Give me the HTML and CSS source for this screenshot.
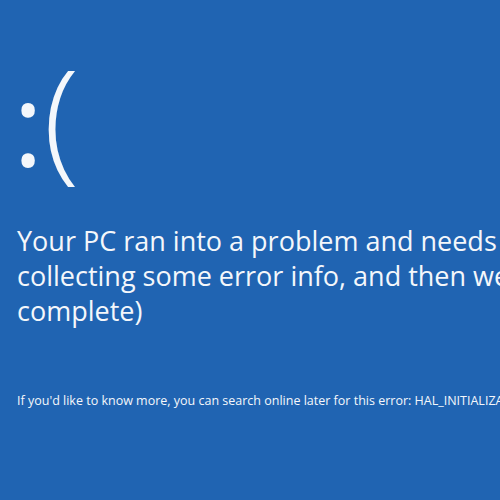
FILE: index.html
```html
<!DOCTYPE html>
<html lang="en">
<head>
    <meta charset="UTF-8">
    <title>Blue Screen</title>
    <link rel="stylesheet" href="styles.css">
</head>
<body>
    <div class="screen">
        <div class="face">
            <span class="eyes">:</span>
            <span class="mouth">(</span>
        </div>
        <p class="message">Your PC ran into a problem and needs to restart. We're just<br>collecting some error info, and then we'll restart for you. (0%<br>complete)</p>
        <p class="details">If you'd like to know more, you can search online later for this error: HAL_INITIALIZATION_FAILED</p>
    </div>
</body>
</html>
```

FILE: styles.css
```css
* {
    margin: 0;
    padding: 0;
    box-sizing: border-box;
}
html, body {
    width: 500px;
    height: 500px;
    overflow: hidden;
}
body {
    background-color: #2064b2;
    color: #f4f7fb;
    font-family: 'Open Sans', 'Noto Sans', sans-serif;
}
.screen {
    display: flex;
    flex-direction: column;
    padding: 48px 0 0 13px;
    width: 900px;
}
.face {
    display: flex;
    align-items: baseline;
    gap: 0;
    line-height: 1;
    height: 165px;
}
.eyes {
    font-size: 115px;
    font-weight: 400;
}
.mouth {
    font-size: 133px;
    font-weight: 300;
}
.message {
    margin-top: 10px;
    padding-left: 4px;
    font-size: 27px;
    font-weight: 400;
    line-height: 35px;
    white-space: nowrap;
}
.details {
    margin-top: 65px;
    padding-left: 4px;
    font-size: 12.5px;
    line-height: 16px;
    white-space: nowrap;
}
```
